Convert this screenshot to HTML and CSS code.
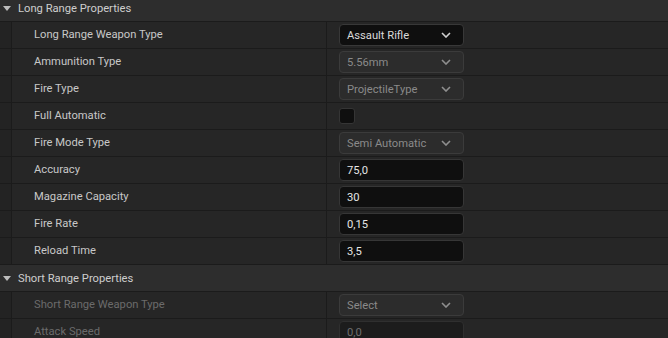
FILE: index.html
```html
<!DOCTYPE html>
<html>
<head>
<meta charset="utf-8">
<link rel="stylesheet" href="styles.css">
</head>
<body>
<div class="panel">
  <div class="header first"><span class="tri"></span><span class="htext">Long Range Properties</span></div>

  <div class="row">
    <div class="strip"></div>
    <div class="label">Long Range Weapon Type</div>
    <div class="value"><div class="combo active"><span>Assault Rifle</span><svg class="chev" viewBox="0 0 10 6"><path d="M1 1 L5 5 L9 1"/></svg></div></div>
  </div>
  <div class="row">
    <div class="strip"></div>
    <div class="label">Ammunition Type</div>
    <div class="value"><div class="combo disabled"><span>5.56mm</span><svg class="chev" viewBox="0 0 10 6"><path d="M1 1 L5 5 L9 1"/></svg></div></div>
  </div>
  <div class="row">
    <div class="strip"></div>
    <div class="label">Fire Type</div>
    <div class="value"><div class="combo disabled"><span>ProjectileType</span><svg class="chev" viewBox="0 0 10 6"><path d="M1 1 L5 5 L9 1"/></svg></div></div>
  </div>
  <div class="row">
    <div class="strip"></div>
    <div class="label">Full Automatic</div>
    <div class="value"><div class="check"></div></div>
  </div>
  <div class="row">
    <div class="strip"></div>
    <div class="label">Fire Mode Type</div>
    <div class="value"><div class="combo disabled"><span>Semi Automatic</span><svg class="chev" viewBox="0 0 10 6"><path d="M1 1 L5 5 L9 1"/></svg></div></div>
  </div>
  <div class="row">
    <div class="strip"></div>
    <div class="label">Accuracy</div>
    <div class="value"><div class="field">75,0</div></div>
  </div>
  <div class="row">
    <div class="strip"></div>
    <div class="label">Magazine Capacity</div>
    <div class="value"><div class="field">30</div></div>
  </div>
  <div class="row">
    <div class="strip"></div>
    <div class="label">Fire Rate</div>
    <div class="value"><div class="field">0,15</div></div>
  </div>
  <div class="row">
    <div class="strip"></div>
    <div class="label">Reload Time</div>
    <div class="value"><div class="field">3,5</div></div>
  </div>

  <div class="header"><span class="tri"></span><span class="htext">Short Range Properties</span></div>

  <div class="row">
    <div class="strip"></div>
    <div class="label dim">Short Range Weapon Type</div>
    <div class="value"><div class="combo disabled"><span>Select</span><svg class="chev" viewBox="0 0 10 6"><path d="M1 1 L5 5 L9 1"/></svg></div></div>
  </div>
  <div class="row">
    <div class="strip"></div>
    <div class="label dim">Attack Speed</div>
    <div class="value"><div class="field disabled-field">0,0</div></div>
  </div>
</div>
</body>
</html>
```

FILE: styles.css
```css
html, body {
  margin: 0;
  padding: 0;
  background: #262626;
  overflow: hidden;
}
body {
  width: 668px;
  height: 338px;
  font-family: Roboto, "Liberation Sans", sans-serif;
  font-size: 11.2px;
}
.panel {
  display: flex;
  flex-direction: column;
  margin-top: -5px;
}
.header {
  height: 26px;
  border-bottom: 1px solid #1b1b1b;
  background: #2d2d2d;
  display: flex;
  align-items: center;
  color: #cdcdcd;
}
.tri {
  width: 0;
  height: 0;
  border-left: 4px solid transparent;
  border-right: 4px solid transparent;
  border-top: 5px solid #bdbdbd;
  margin-left: 3px;
  margin-right: 7px;
}
.row {
  height: 26px;
  border-bottom: 1px solid #1b1b1b;
  display: flex;
  background: #262626;
}
.strip {
  width: 11px;
  background: #232323;
  border-right: 1px solid #1b1b1b;
}
.label {
  box-sizing: border-box;
  width: 315px;
  padding-left: 22px;
  padding-bottom: 1px;
  border-right: 1px solid #1b1b1b;
  display: flex;
  align-items: center;
  color: #c8c8c8;
}
.label.dim {
  color: #6b6b6b;
}
.value {
  flex: 1;
  padding-left: 12px;
  display: flex;
  align-items: center;
}
.combo, .field {
  box-sizing: border-box;
  width: 125px;
  height: 22px;
  border-radius: 4px;
  display: flex;
  align-items: center;
  padding-left: 7px;
  padding-right: 12px;
}
.combo {
  justify-content: space-between;
}
.combo.active {
  background: #0f0f0f;
  border: 1px solid #383838;
  color: #dadada;
}
.combo.disabled {
  background: #2c2c2c;
  border: 1px solid #3b3b3b;
  color: #8a8a8a;
}
.chev {
  width: 10px;
  height: 6px;
  fill: none;
  stroke-width: 1.6;
}
.combo.active .chev { stroke: #d0d0d0; }
.combo.disabled .chev { stroke: #8f8f8f; }
.field {
  background: #0f0f0f;
  border: 1px solid #363636;
  color: #e6e6e6;
}
.field.disabled-field {
  background: #1c1c1c;
  border-color: #2f2f2f;
  color: #6f6f6f;
}
.check {
  box-sizing: border-box;
  width: 16px;
  height: 16px;
  border-radius: 3px;
  background: #0f0f0f;
  border: 1px solid #353535;
}
```
